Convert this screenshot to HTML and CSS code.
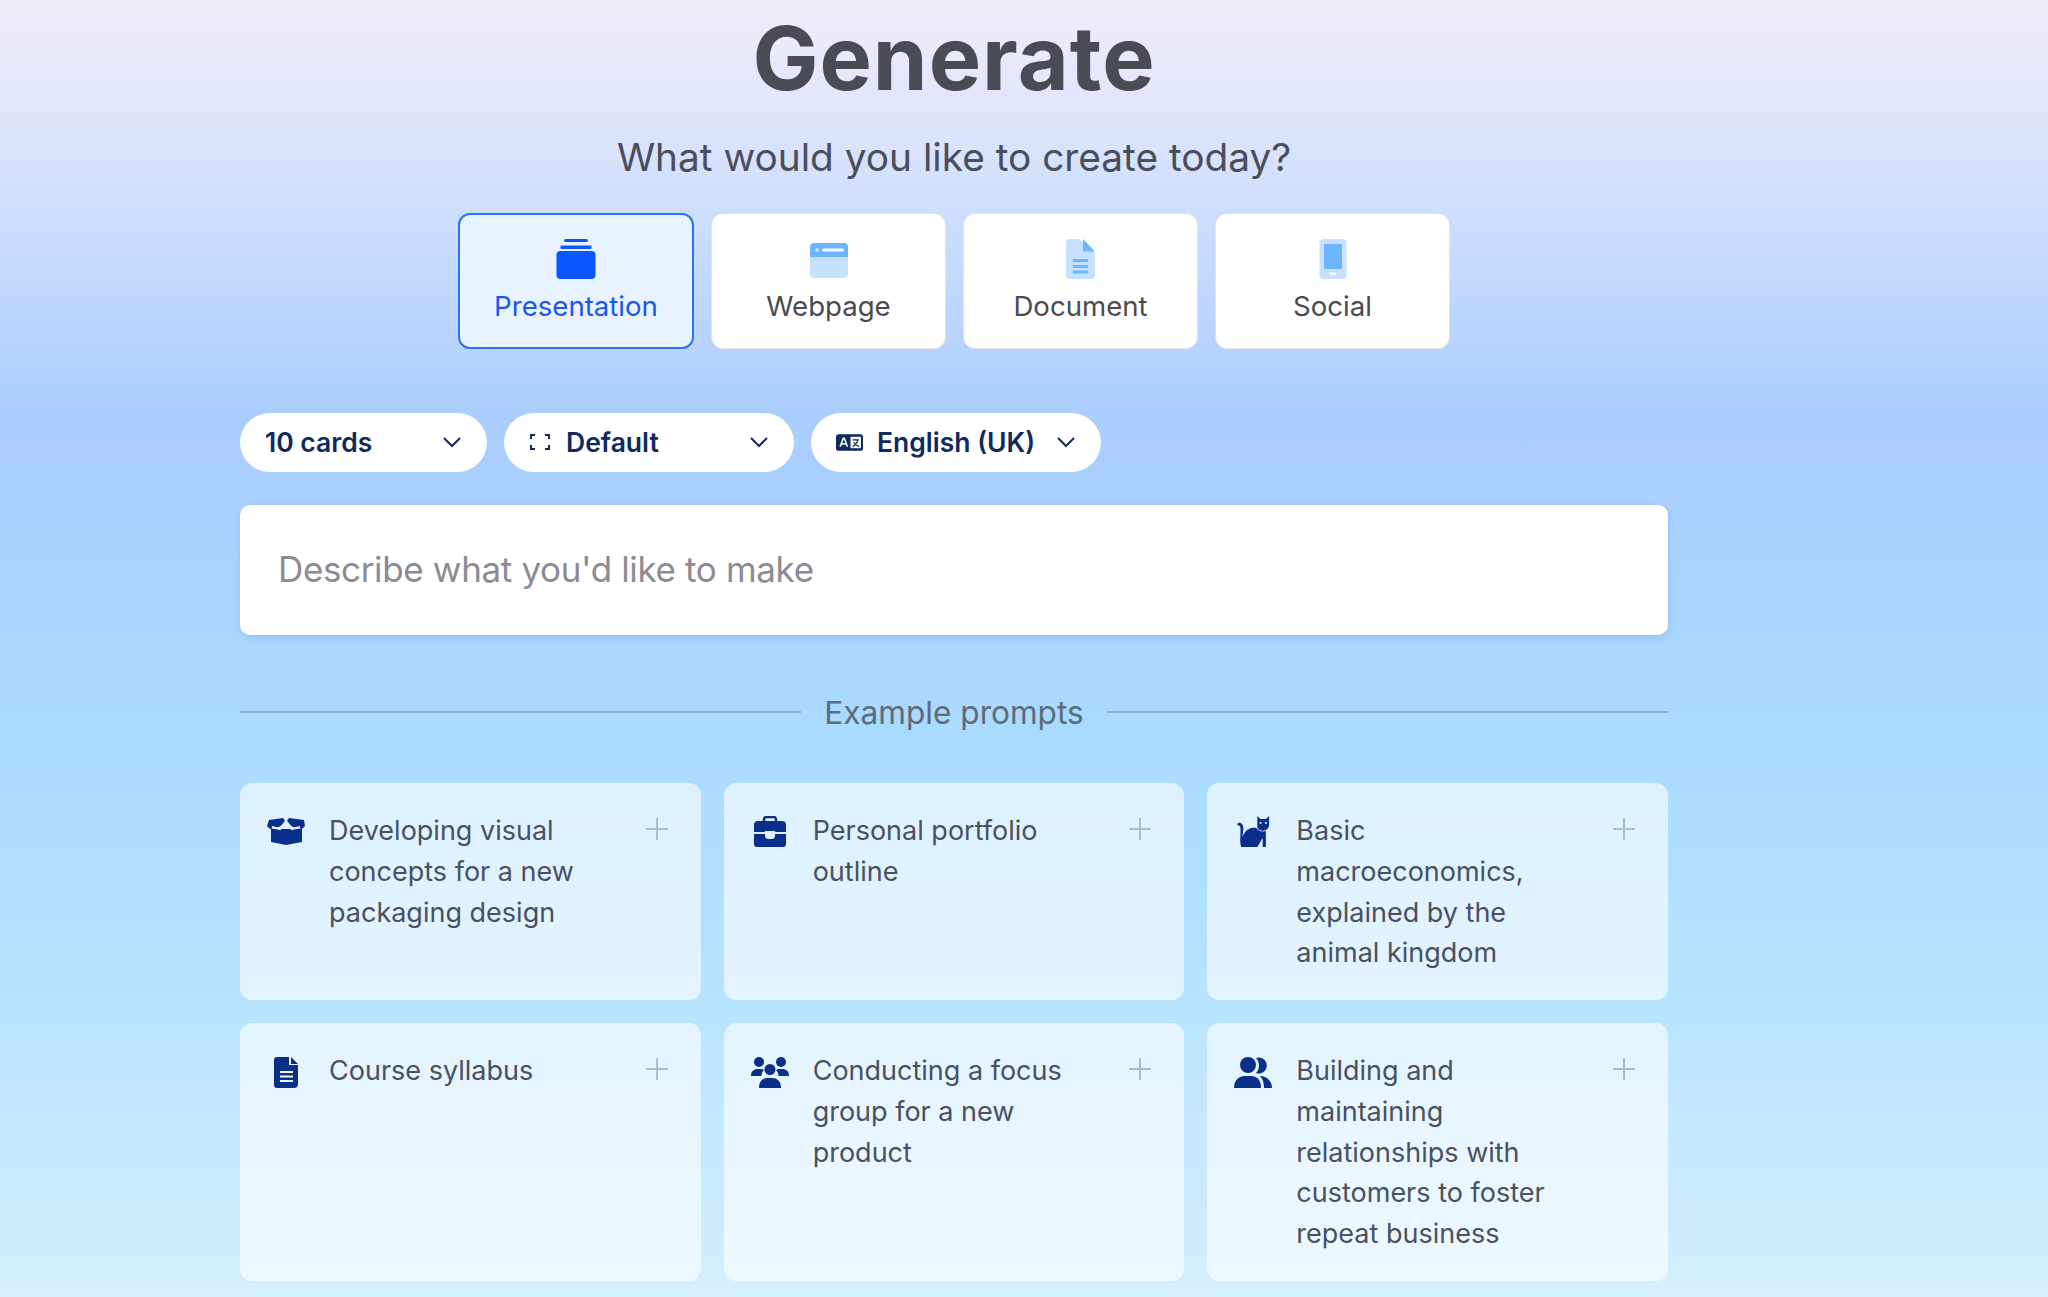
FILE: index.html
```html
<!DOCTYPE html>
<html>

<head>
  <meta charset="utf-8">
  <title>Generate</title>
  <link rel="stylesheet" href="styles.css">
</head>

<body>
  <div class="page">
    <h1 class="title">Generate</h1>
    <p class="subtitle">What would you like to create today?</p>

    <div class="tabs">
      <div class="tab active">
        <svg class="tab-icon" viewBox="0 0 40 40" fill="#0b57ff">
          <rect x="8" y="0" width="24" height="3" rx="1.5"/>
          <rect x="4.500" y="6.500" width="31" height="3.500" rx="1"/>
          <rect x="0.500" y="12" width="39" height="28" rx="4"/>
        </svg>
        <span>Presentation</span>
      </div>
      <div class="tab">
        <svg class="tab-icon" viewBox="0 0 40 40">
          <path d="M1 18h38v17a4 4 0 0 1-4 4H5a4 4 0 0 1-4-4z" fill="#c6e1ff"/>
          <path d="M5 4h30a4 4 0 0 1 4 4v10H1V8a4 4 0 0 1 4-4z" fill="#6bb6ff"/>
          <circle cx="8" cy="11" r="2" fill="#c6e1ff"/>
          <rect x="13" y="9.500" width="22" height="3" rx="1.500" fill="#fff"/>
        </svg>
        <span>Webpage</span>
      </div>
      <div class="tab">
        <svg class="tab-icon" viewBox="0 0 40 40">
          <path d="M8 0h10l16 13v23a4 4 0 0 1-4 4H8a4 4 0 0 1-3-1.500V3a4 4 0 0 1 3-3z" fill="#c6e1ff"/>
          <path d="M22 0l12 12.500H22z" fill="#6bb6ff"/>
          <rect x="12" y="20" width="15" height="3" fill="#6bb6ff"/>
          <rect x="12" y="26" width="15" height="3" fill="#6bb6ff"/>
          <rect x="12" y="31.500" width="15" height="3" fill="#6bb6ff"/>
        </svg>
        <span>Document</span>
      </div>
      <div class="tab">
        <svg class="tab-icon" viewBox="0 0 40 40">
          <rect x="6.500" y="0" width="27" height="40" rx="4" fill="#c6e1ff"/>
          <rect x="11" y="5" width="18" height="25" fill="#6bb6ff"/>
          <rect x="16.500" y="33.500" width="7" height="2.500" rx="1.200" fill="#fff"/>
        </svg>
        <span>Social</span>
      </div>
    </div>

    <div class="controls">
      <div class="pill pill-cards">
        <span class="pill-label">10 cards</span>
        <svg class="chevron" viewBox="0 0 20 12"><path d="M2 2l8 8 8-8"/></svg>
      </div>
      <div class="pill pill-size">
        <svg class="pill-icon size-icon" viewBox="0 0 22 18">
          <path d="M6 2H2v4M16 2h4v4M6 16H2v-4M16 16h4v-4"/>
        </svg>
        <span class="pill-label">Default</span>
        <svg class="chevron" viewBox="0 0 20 12"><path d="M2 2l8 8 8-8"/></svg>
      </div>
      <div class="pill pill-lang">
        <svg class="pill-icon lang-icon" viewBox="0 0 26 16">
          <rect width="26" height="16" rx="2.500" fill="#0e2a5f"/>
          <rect x="14" y="2.500" width="10" height="11" fill="#fff"/>
          <path d="M4 12l3-8h1l3 8M5 9.500h5" fill="none" stroke="#fff" stroke-width="1.500"/>
          <path d="M16 5.500h6M21 5.500c-.5 3-2.500 5-5 6.500M17 7.500c1 2 2.500 3.500 5 4.500" fill="none" stroke="#0e2a5f" stroke-width="1.200"/>
        </svg>
        <span class="pill-label">English (UK)</span>
        <svg class="chevron" viewBox="0 0 20 12"><path d="M2 2l8 8 8-8"/></svg>
      </div>
    </div>

    <div class="prompt-box">Describe what you'd like to make</div>

    <div class="divider">
      <span class="divider-line"></span>
      <span>Example prompts</span>
      <span class="divider-line"></span>
    </div>

    <div class="examples">
      <div class="card">
        <svg class="card-icon" viewBox="0 0 40 32">
          <path d="M5 13h31v13l-16 3-15-3z"/>
          <path d="M3 4l14-2 3 4 3-4 15 2 1 6-3 3-9-2-7-5-7 5-9 2-3-3z"/>
          <path d="M6 11l8 2 6-8 6 8 8-2" fill="none" stroke="#e4f3ff" stroke-width="2"/>
        </svg>
        <div class="card-text">Developing visual concepts for a new packaging design</div>
        <span class="plus"></span>
      </div>
      <div class="card">
        <svg class="card-icon" viewBox="0 0 40 32">
          <path d="M14 6V3.500A2.500 2.500 0 0 1 16.500 1h7A2.500 2.500 0 0 1 26 3.500V6" fill="none" stroke="#0a2f8a" stroke-width="2.500"/>
          <path d="M8 5h24a4 4 0 0 1 4 4v7H25v-1h-10v1H4V9a4 4 0 0 1 4-4z"/>
          <path d="M4 18h11v2c0 1.500 1 3 3 3h4c2 0 3-1.500 3-3v-2h11v10a3 3 0 0 1-3 3H7a3 3 0 0 1-3-3z"/>
        </svg>
        <div class="card-text">Personal portfolio outline</div>
        <span class="plus"></span>
      </div>
      <div class="card">
        <svg class="card-icon" viewBox="0 0 40 32">
          <g transform="translate(.8 0) scale(1.07 1)">
            <path d="M4 7c3-1 5 2 5 6l-1 8c3-8 8-10 13-9 2 3 5 4 9 3v16h-3v-9l-5 9H7c-2-5 0-16-1-20 0-1-1-2-3-2z"/>
            <path d="M22 0l3 3h5l3-3v9a6 6 0 0 1-11 3z"/>
            <circle cx="25" cy="7" r="1" fill="#e4f3ff"/>
            <circle cx="30" cy="7" r="1" fill="#e4f3ff"/>
          </g>
        </svg>
        <div class="card-text">Basic macroeconomics, explained by the animal kingdom</div>
        <span class="plus"></span>
      </div>
      <div class="card">
        <svg class="card-icon" viewBox="0 0 40 32">
          <path d="M11 1h12v8h9v19a4 4 0 0 1-4 4H11a3 3 0 0 1-3-3V4a3 3 0 0 1 3-3z"/>
          <path d="M25 1l7 7h-7z"/>
          <path d="M14 16h13M14 20.500h13M14 25h13" stroke="#eef7ff" stroke-width="2"/>
        </svg>
        <div class="card-text">Course syllabus</div>
        <span class="plus"></span>
      </div>
      <div class="card">
        <svg class="card-icon" viewBox="0 0 40 32">
          <circle cx="9" cy="6" r="5"/>
          <circle cx="31" cy="6" r="5"/>
          <path d="M1 20c0-5 3-7 7-7h3c1 0 2 .5 3 1-2 2-2.500 4-2.500 6z"/>
          <path d="M39 20c0-5-3-7-7-7h-3c-1 0-2 .5-3 1 2 2 2.500 4 2.500 6z"/>
          <circle cx="20" cy="13.500" r="5.500"/>
          <path d="M9 32c0-7 4-10 9-10h4c5 0 9 3 9 10z"/>
        </svg>
        <div class="card-text">Conducting a focus group for a new product</div>
        <span class="plus"></span>
      </div>
      <div class="card">
        <svg class="card-icon" viewBox="0 0 40 32">
          <path d="M23 2a8 8 0 1 1 0 15c2-2 3-5 3-7.500S25 4 23 2z"/>
          <circle cx="15" cy="9" r="8"/>
          <path d="M1 32c0-8 5-12 11-12h6c6 0 10 4 10 12z"/>
          <path d="M27 20c7 0 12 5 12 12h-8c0-5-1-9-4-12z"/>
        </svg>
        <div class="card-text">Building and maintaining relationships with customers to foster repeat business</div>
        <span class="plus"></span>
      </div>
    </div>
  </div>
</body>

</html>
```

FILE: styles.css
```css
* {
  box-sizing: border-box;
}

html,
body {
  height: 100%;
}

body {
  margin: 0;
  overflow: hidden;
  font-family: Inter, "Liberation Sans", sans-serif;
  background: linear-gradient(180deg, #f1edf8 0, #d2e0fd 190px, #a9cdff 420px, #a9dbff 740px, #b8e3ff 1000px, #d4efff 1297px);
}

.page {
  width: 1428px;
  margin-left: 240px;
  padding-top: 8px;
}

.title {
  margin: 0;
  font-size: 88px;
  line-height: 100px;
  font-weight: 700;
  letter-spacing: 1px;
  text-align: center;
  color: #4b4b55;
}

.subtitle {
  margin: 24px 0 0;
  font-size: 38.8px;
  line-height: 50px;
  text-align: center;
  color: #4b4e5a;
}

.tabs {
  display: flex;
  justify-content: center;
  gap: 17px;
  margin-top: 31px;
}

.tab {
  display: flex;
  flex-direction: column;
  align-items: center;
  width: 235px;
  height: 136px;
  padding-top: 25px;
  font-size: 27.6px;
  color: #4a4a4f;
  background: #fff;
  border: 1px solid #e8e2e4;
  border-radius: 12px;
}

.tab.active {
  width: 236px;
  padding-top: 24px;
  color: #1a56f0;
  background: #e9f2ff;
  border: 2px solid #2b72f0;
}

.tab span {
  margin-top: 10px;
}

.tab-icon {
  width: 40px;
  height: 40px;
}

.controls {
  display: flex;
  gap: 17px;
  margin-top: 64px;
}

.pill {
  display: flex;
  align-items: center;
  height: 59px;
  padding: 0 25px 1px;
  font-size: 26.5px;
  font-weight: 600;
  color: #0e2a5f;
  background: #fff;
  border-radius: 30px;
}

.pill-cards {
  width: 247px;
}

.pill-size {
  width: 290px;
}

.pill-lang {
  width: 290px;
}

.pill-icon {
  flex: none;
  margin-right: 15px;
}

.size-icon {
  width: 22px;
  height: 18px;
  fill: none;
  stroke: #0e2a5f;
  stroke-width: 2;
}

.lang-icon {
  width: 27px;
  height: 17px;
  margin-right: 14px;
}

.chevron {
  flex: none;
  width: 20px;
  height: 12px;
  margin-left: auto;
  fill: none;
  stroke: #0e2a5f;
  stroke-width: 2;
}

.prompt-box {
  height: 130px;
  margin-top: 33px;
  padding: 0 38px;
  font-size: 35px;
  letter-spacing: -0.35px;
  line-height: 128px;
  color: #8b8b92;
  background: #fff;
  border-radius: 10px;
  box-shadow: 0 2px 6px rgba(60, 110, 170, 0.2);
}

.divider {
  display: flex;
  align-items: center;
  gap: 23px;
  height: 40px;
  margin-top: 57px;
  font-size: 31.6px;
  color: #5f6b78;
}

.divider-line {
  flex: 1;
  height: 2px;
  background: #8db4d2;
}

.examples {
  display: grid;
  grid-template-columns: repeat(3, 1fr);
  grid-template-rows: 217px 258px;
  gap: 23px;
  margin-top: 51px;
}

.card {
  display: flex;
  align-items: flex-start;
  padding: 28px 33px 0 26px;
  background: rgba(255, 255, 255, 0.6);
  border-radius: 12px;
}

.card-icon {
  flex: none;
  width: 40px;
  height: 32px;
  margin-top: 5px;
  fill: #0a2f8a;
}

.card-text {
  flex: 1;
  margin-left: 23px;
  padding-right: 30px;
  font-size: 27px;
  line-height: 40.8px;
  color: #4a5060;
}

.plus {
  position: relative;
  flex: none;
  width: 22px;
  height: 22px;
  margin-top: 7px;
}

.plus::before,
.plus::after {
  content: "";
  position: absolute;
  background: #a9bdcc;
}

.plus::before {
  left: 0;
  right: 0;
  top: 10px;
  height: 2px;
}

.plus::after {
  top: 0;
  bottom: 0;
  left: 10px;
  width: 2px;
}
```
